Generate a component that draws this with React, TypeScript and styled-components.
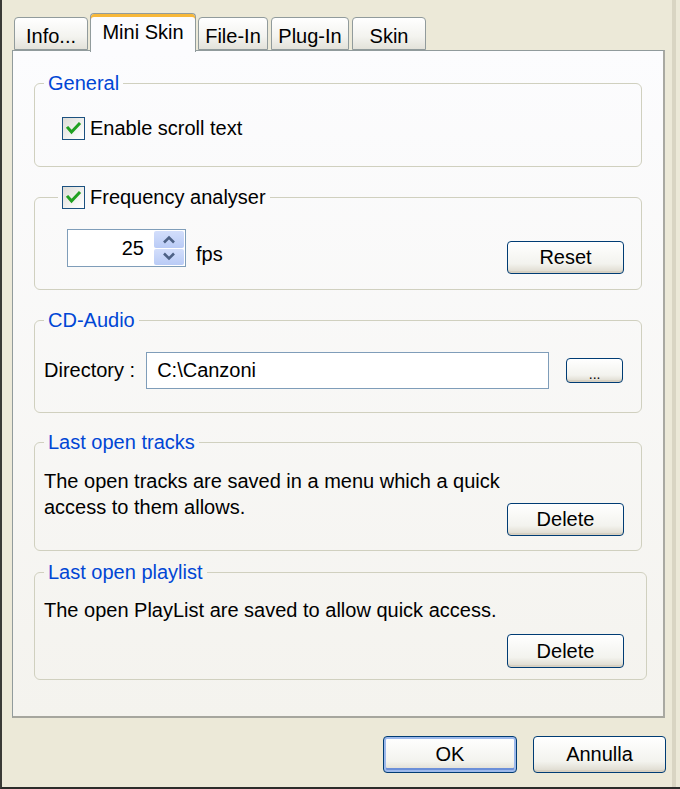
import * as React from "react";
import styled, { createGlobalStyle } from "styled-components";

const GlobalStyle = createGlobalStyle`
    html, body {
        margin: 0;
        padding: 0;
        background: #ece9d8;
    }
    body {
        font-family: "Liberation Sans", Arial, sans-serif;
        font-size: 20px;
        color: #000;
    }
    button, input {
        font: inherit;
    }
`;

type TabDef = { label: string; width: number; active?: boolean };

const tabs: TabDef[] = [
    { label: "Info...", width: 74 },
    { label: "Mini Skin", width: 106, active: true },
    { label: "File-In", width: 70 },
    { label: "Plug-In", width: 78 },
    { label: "Skin", width: 74 },
];

const App: React.FC = () => {
    return (
        <Window>
            <GlobalStyle />
            <TabStrip>
                {tabs.map((t) => (
                    <Tab key={t.label} $w={t.width} $active={!!t.active}>
                        {t.label}
                    </Tab>
                ))}
            </TabStrip>

            <Panel>
                <Group $h={95}>
                    <Legend>General</Legend>
                    <CheckRow $mt={23} $ml={18}>
                        <CheckBox checked />
                        <span>Enable scroll text</span>
                    </CheckRow>
                </Group>

                <Group $h={104} $mt={19}>
                    <CheckLegend>
                        <CheckBox checked />
                        <span>Frequency analyser</span>
                    </CheckLegend>
                    <Row $mt={20}>
                        <Spin>
                            <SpinValue>25</SpinValue>
                            <SpinButtons>
                                <SpinHalf>
                                    <Arrow up />
                                </SpinHalf>
                                <SpinHalf>
                                    <Arrow />
                                </SpinHalf>
                            </SpinButtons>
                        </Spin>
                        <Unit>fps</Unit>
                        <Spacer />
                        <Button $w={117} $h={33} $mt={12}>
                            Reset
                        </Button>
                    </Row>
                </Group>

                <Group $h={104} $mt={19}>
                    <Legend>CD-Audio</Legend>
                    <Row $mt={21} $center>
                        <FieldLabel>Directory :</FieldLabel>
                        <TextField readOnly value="C:\Canzoni" />
                        <Button $w={57} $h={25} $ml={17}>
                            <Dots>...</Dots>
                        </Button>
                    </Row>
                </Group>

                <Group $h={120} $mt={18}>
                    <Legend>Last open tracks</Legend>
                    <Row $mt={15}>
                        <Note>
                            The open tracks are saved in a menu which a quick
                            <br />
                            access to them allows.
                        </Note>
                        <Spacer />
                        <Button $w={117} $h={33} $mt={35}>
                            Delete
                        </Button>
                    </Row>
                </Group>

                <Group $h={119} $mt={10} $mr={-5}>
                    <Legend>Last open playlist</Legend>
                    <Row $mt={14}>
                        <Note>The open PlayList are saved to allow quick access.</Note>
                        <Spacer />
                        <Button $w={117} $h={34} $mt={37} $mr={5}>
                            Delete
                        </Button>
                    </Row>
                </Group>
            </Panel>

            <Footer>
                <Button $w={134} $h={37} $default>
                    OK
                </Button>
                <Button $w={133} $h={37}>
                    Annulla
                </Button>
            </Footer>
        </Window>
    );
};

const CheckBox: React.FC<{ checked?: boolean }> = ({ checked }) => (
    <Box>
        {checked && (
            <svg width="21" height="21" viewBox="0 0 21 21">
                <path
                    d="M5 10 L8.5 14 L16 6"
                    fill="none"
                    stroke="#21a121"
                    strokeWidth="3"
                    strokeLinecap="square"
                />
            </svg>
        )}
    </Box>
);

const Arrow: React.FC<{ up?: boolean }> = ({ up }) => (
    <svg width="14" height="9" viewBox="0 0 14 9">
        <path
            d={up ? "M2 7.5 L7 2.5 L12 7.5" : "M2 1.5 L7 6.5 L12 1.5"}
            fill="none"
            stroke="#4d6185"
            strokeWidth="2.6"
        />
    </svg>
);

const Window = styled("div")`
    box-sizing: border-box;
    width: 680px;
    height: 789px;
    padding: 13px 15px 0 10px;
    border-left: 2px solid #3a3a36;
    border-bottom: 2px solid #2c2c2a;
    background: #ece9d8;
    box-shadow: inset -4px 0 0 #ece9d8, inset -8px 0 0 #d9d5c3;
    display: flex;
    flex-direction: column;
`;

const TabStrip = styled("div")`
    display: flex;
    align-items: flex-end;
    gap: 3px;
    margin-left: 2px;
    height: 39px;
    margin-bottom: -2px;
    position: relative;
    z-index: 1;
`;

const Tab = styled("div")<{ $w: number; $active: boolean }>`
    box-sizing: border-box;
    width: ${(p) => p.$w}px;
    height: ${(p) => (p.$active ? 39 : 33)}px;
    margin: 0 ${(p) => (p.$active ? -1 : 0)}px ${(p) => (p.$active ? 0 : 2)}px;
    display: flex;
    justify-content: center;
    padding-top: ${(p) => (p.$active ? 7 : 7)}px;
    border: 1px solid #919b9c;
    border-bottom: ${(p) => (p.$active ? "none" : "1px solid #919b9c")};
    border-radius: 4px 4px 0 0;
    background: ${(p) =>
        p.$active
            ? "#fcfcfe"
            : "linear-gradient(#ffffff, #f3f3ef 60%, #e3e2da)"};
    box-shadow: ${(p) => (p.$active ? "inset 0 3px 0 #f7b83a" : "none")};
    white-space: nowrap;
`;

const Panel = styled("div")`
    box-sizing: border-box;
    height: 668px;
    padding: 21px 21px 0 21px;
    border: 1px solid #919b9c;
    border-bottom: 2px solid #a6a69e;
    border-right: 2px solid #a9a9a2;
    background: linear-gradient(#fcfcfe, #f4f3ee);
    display: flex;
    flex-direction: column;
`;

const Group = styled("fieldset")<{ $h: number; $mt?: number; $mr?: number }>`
    box-sizing: border-box;
    height: ${(p) => p.$h}px;
    margin: ${(p) => p.$mt ?? 0}px ${(p) => p.$mr ?? 0}px 0 0;
    padding: 0 17px 0 9px;
    border: 1px solid #d0d0bf;
    border-radius: 6px;
    min-inline-size: 0;
`;

const Legend = styled("legend")`
    padding: 0 4px;
    line-height: 22px;
    color: #0046d5;
`;

const CheckLegend = styled("legend")`
    display: flex;
    align-items: center;
    gap: 5px;
    margin-left: 14px;
    padding: 0 4px;
    line-height: 23px;
`;

const Box = styled("span")`
    box-sizing: border-box;
    width: 23px;
    height: 23px;
    flex: none;
    display: inline-flex;
    align-items: center;
    justify-content: center;
    border: 1px solid #1c5180;
    background: linear-gradient(135deg, #dcdcd7, #fafaf8 80%, #ffffff);
`;

const CheckRow = styled("div")<{ $mt: number; $ml: number }>`
    display: flex;
    align-items: center;
    gap: 5px;
    margin: ${(p) => p.$mt}px 0 0 ${(p) => p.$ml}px;
    line-height: 23px;
`;

const Row = styled("div")<{ $mt: number; $center?: boolean }>`
    display: flex;
    align-items: ${(p) => (p.$center ? "center" : "flex-start")};
    margin-top: ${(p) => p.$mt}px;
`;

const Spacer = styled("div")`
    flex: 1;
`;

const Spin = styled("div")`
    box-sizing: border-box;
    width: 119px;
    height: 38px;
    margin-left: 23px;
    display: flex;
    align-items: stretch;
    border: 1px solid #7f9db9;
    background: #fff;
    padding: 1px;
`;

const SpinValue = styled("div")`
    flex: 1;
    display: flex;
    align-items: center;
    justify-content: flex-end;
    padding-right: 10px;
`;

const SpinButtons = styled("div")`
    width: 30px;
    display: flex;
    flex-direction: column;
    gap: 1px;
`;

const SpinHalf = styled("div")`
    flex: 1;
    display: flex;
    align-items: center;
    justify-content: center;
    background: linear-gradient(#d3defb, #b9cbf6);
    border-radius: 2px;
`;

const Unit = styled("span")`
    margin: 14px 0 0 10px;
    line-height: 23px;
`;

const FieldLabel = styled("span")`
    margin-right: 11px;
`;

const TextField = styled("input")`
    box-sizing: border-box;
    width: 403px;
    height: 37px;
    padding: 0 10px;
    border: 1px solid #7f9db9;
    background: #fff;
    color: #000;
    outline: none;
`;

const Dots = styled("span")`
    font-size: 14px;
    position: relative;
    top: 3px;
`;

const Note = styled("div")`
    line-height: 26px;
    white-space: nowrap;
`;

const Button = styled("button")<{
    $w: number;
    $h: number;
    $mt?: number;
    $ml?: number;
    $mr?: number;
    $default?: boolean;
}>`
    box-sizing: border-box;
    width: ${(p) => p.$w}px;
    height: ${(p) => p.$h}px;
    margin: ${(p) => p.$mt ?? 0}px ${(p) => p.$mr ?? 0}px 0 ${(p) => p.$ml ?? 0}px;
    flex: none;
    padding: 0;
    display: flex;
    align-items: center;
    justify-content: center;
    border: 1px solid #003c74;
    border-radius: 4px;
    color: #000;
    background: linear-gradient(#ffffff, #f3f3ee 70%, #dcd8cc);
    box-shadow: ${(p) =>
        p.$default
            ? "inset 0 0 0 2px #9db9eb, inset 0 -2px 0 2px #6c8fd8"
            : "inset 0 -2px 0 #d6d0c2"};
`;

const Footer = styled("div")`
    display: flex;
    justify-content: flex-end;
    gap: 16px;
    margin-top: 18px;
    margin-right: -1px;
`;

export default App;
